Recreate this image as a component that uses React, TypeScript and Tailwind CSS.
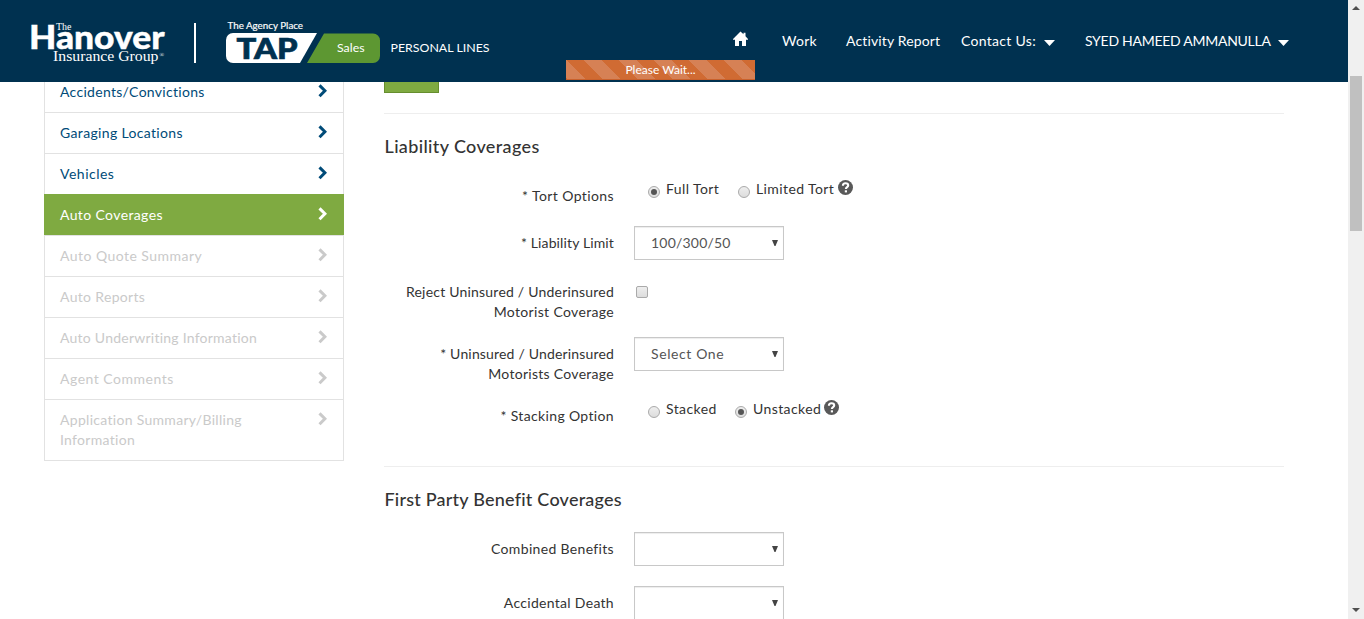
import type { ReactNode } from "react";

type NavItem = { label: string; state: "done" | "active" | "disabled"; tracking: string };

const navItems: NavItem[] = [
  { label: "Accidents/Convictions", state: "done", tracking: "tracking-[0.300px]" },
  { label: "Garaging Locations", state: "done", tracking: "tracking-[0.340px]" },
  { label: "Vehicles", state: "done", tracking: "tracking-[0.5px]" },
  { label: "Auto Coverages", state: "active", tracking: "tracking-[0.380px]" },
  { label: "Auto Quote Summary", state: "disabled", tracking: "tracking-[0.460px]" },
  { label: "Auto Reports", state: "disabled", tracking: "tracking-[0.330px]" },
  { label: "Auto Underwriting Information", state: "disabled", tracking: "tracking-[0.240px]" },
  { label: "Agent Comments", state: "disabled", tracking: "tracking-[0.5px]" },
  { label: "Application Summary/Billing Information", state: "disabled", tracking: "tracking-[0.300px]" },
];

const navStyles = {
  done: "border-[#e2e2e2] text-[#004b78]",
  active: "border-[#7faa41] bg-[#7faa41] text-white",
  disabled: "border-[#e2e2e2] text-[#cacaca]",
};

function Chevron() {
  return (
    <svg className="mt-[2px] h-[14px] w-[9px] shrink-0" viewBox="0 0 9 14" fill="none" stroke="currentColor" strokeWidth="3">
      <path d="M1.500 1.400 6.900 6.800 1.500 12.200" />
    </svg>
  );
}

function Caret() {
  return (
    <svg className="h-[6px] w-[11px]" viewBox="0 0 11 6" fill="currentColor">
      <path d="M0 0h11L5.5 6z" />
    </svg>
  );
}

function Help() {
  return (
    <svg className="h-[15px] w-[15px]" viewBox="0 0 15 15" fill="none">
      <circle cx="7.5" cy="7.5" r="7.5" fill="#595959" />
      <path d="M4.900 5.700C4.900 3.900 6 3.200 7.500 3.200s2.700.8 2.700 2.200c0 1.700-2.300 1.700-2.300 3.500" stroke="#fff" strokeWidth="2.100" />
      <path d="M6.800 10.300h2.200v2.100H6.800z" fill="#fff" />
    </svg>
  );
}

function Logo() {
  return (
    <svg className="h-[82px] w-[500px]" viewBox="0 0 500 82" fill="#fff">
      <text x="56" y="29.500" fontFamily="Liberation Serif, serif" fontSize="9.500" textLength="15.500" lengthAdjust="spacingAndGlyphs">The</text>
      <text x="29" y="48.500" fontFamily="Lato, sans-serif" fontWeight="900" fontSize="31.500" stroke="#fff" strokeWidth=".4" textLength="135.500" lengthAdjust="spacingAndGlyphs">
        Hanover
      </text>
      <text x="53" y="60.700" fontFamily="Liberation Serif, serif" fontSize="15" textLength="105.500" lengthAdjust="spacingAndGlyphs">
        Insurance Group
      </text>
      <text x="159.500" y="57" fontFamily="Liberation Serif, serif" fontSize="6">®</text>
      <path d="M194 23h2v40h-2z" />
      <text x="227.500" y="29" fontFamily="Lato, sans-serif" fontWeight="400" stroke="#fff" strokeWidth=".15" fontSize="8.500" textLength="75.500" lengthAdjust="spacingAndGlyphs">
        The Agency Place
      </text>
      <path d="M233 33h84l-17 30h-67a7 7 0 0 1-7-7V40a7 7 0 0 1 7-7z" />
      <path d="M324 33.500h49a7 7 0 0 1 7 7V56a7 7 0 0 1-7 7h-66z" fill="#5d9732" />
      <text x="236.500" y="58.700" fill="#003150" stroke="#003150" strokeWidth=".7" fontFamily="Lato, sans-serif" fontWeight="900" fontSize="28.500" textLength="61" lengthAdjust="spacingAndGlyphs">
        TAP
      </text>
      <text x="337" y="52" fontFamily="Lato, sans-serif" fontWeight="400" fontSize="11.500" textLength="27.500" lengthAdjust="spacingAndGlyphs">
        Sales
      </text>
      <text x="390.500" y="52" fontFamily="Lato, sans-serif" fontWeight="400" fontSize="11.500" textLength="99" lengthAdjust="spacingAndGlyphs">
        PERSONAL LINES
      </text>
    </svg>
  );
}

function Header() {
  return (
    <header className="relative flex h-[82px] shrink-0 bg-[#003150] text-white">
      <Logo />
      <nav className="flex pt-[31px] text-[14px] leading-5">
        <svg className="ml-[233px] h-[15px] w-[15px]" viewBox="0 0 15 15" fill="#fff">
          <path d="M7.500.5 10.500 3.300V1.800h2V5.300L15 7.900v.8h-2V15H9v-5H6v5H2V8.700H0v-.8z" />
        </svg>
        <span className="ml-[34px] w-[64px] tracking-[0.250px]">Work</span>
        <span className="w-[115px] whitespace-nowrap tracking-[0.150px]">Activity Report</span>
        <span className="w-[83px] whitespace-nowrap tracking-[0.300px]">Contact Us:</span>
        <span className="mt-[9px] w-[41px]"><Caret /></span>
        <span className="w-[193px] whitespace-nowrap tracking-[-0.270px]">SYED HAMEED AMMANULLA</span>
        <span className="mt-[9px]"><Caret /></span>
      </nav>
      <div className="absolute top-[60px] left-[566px] flex h-5 w-[189px] items-center justify-center border-b border-[#c9612c] bg-[repeating-linear-gradient(45deg,#d06b33_0px,#d06b33_1.4px,#d68155_1.4px,#d68155_14px,#d06b33_14px,#d06b33_24.75px)] text-[12px] leading-5">
        Please Wait...
      </div>
    </header>
  );
}

function Sidebar() {
  return (
    <ul className="-mt-[11px] ml-[44px] w-[300px] shrink-0">
      {navItems.map((item) => (
        <li key={item.label} className={`-mb-px flex justify-between border py-[10px] pr-4 pl-[15px] ${navStyles[item.state]}`}>
          <span className={`w-[220px] ${item.tracking}`}>{item.label}</span>
          <Chevron />
        </li>
      ))}
    </ul>
  );
}

function Select({ value = "", tracking = "tracking-[0.900px]" }: { value?: string; tracking?: string }) {
  return (
    <div className={`flex h-[34px] w-[150px] items-center justify-between border border-[#c8c8c8] bg-white pr-[5px] pl-4 text-[#555] shadow-[inset_0_1px_1px_rgba(0,0,0,0.075)] ${tracking}`}>
      <span>{value}</span>
      <svg className="h-[6px] w-[6px]" viewBox="0 0 6 6" fill="#444"><path d="M0 0h6L3.500 6h-1z" /></svg>
    </div>
  );
}

function Radio({ label, checked, width }: { label: string; checked?: boolean; width: string }) {
  return (
    <label className={`flex ${width}`}>
      <span className="mt-[7px] flex h-3 w-3 items-center justify-center rounded-full border border-[#aaa] bg-linear-to-b from-[#eee] to-[#ddd]">
        {checked && <span className="h-[6px] w-[6px] rounded-full bg-[#555]" />}
      </span>
      <span className="ml-[6px] whitespace-nowrap">{label}</span>
    </label>
  );
}

function Row({ label, className, children }: { label: ReactNode; className: string; children: ReactNode }) {
  return (
    <div className={`flex ${className}`}>
      <div className="mr-5 w-[230px] shrink-0 text-right">{label}</div>
      {children}
    </div>
  );
}

function Coverages() {
  return (
    <main className="ml-10 w-[900px] tracking-[0.400px] text-[#333]">
      <div className="h-[11px] w-[55px] border border-t-0 border-[#668e2e] bg-[#7faa41]" />
      <section className="mt-5 h-[353px] border-t border-[#eee] pt-[22px]">
        <h2 className="pl-[0.500px] text-[18px] leading-5 font-medium tracking-[0.360px]">Liability Coverages</h2>
        <Row label="* Tort Options" className="mt-[30px] h-10">
          <div className="-mt-[7px] ml-[14px] flex">
            <Radio label="Full Tort" checked width="w-[90px]" />
            <Radio label="Limited Tort" width="w-[100px]" />
            <span className="mt-[1px]"><Help /></span>
          </div>
        </Row>
        <Row label={<div className="pt-[7px] tracking-[0.130px]">* Liability Limit</div>} className="h-[56px]">
          <Select value="100/300/50" tracking="tracking-[0.200px]" />
        </Row>
        <Row label={<><div className="tracking-[0.210px]">Reject Uninsured / Underinsured</div><div className="tracking-[0.340px]">Motorist Coverage</div></>} className="h-[55px]">
          <span className="mt-1 ml-[2px] h-3 w-3 rounded-[2px] border border-[#aaa] bg-linear-to-b from-[#eee] to-[#ddd]" />
        </Row>
        <Row label={<div className="pt-[7px]"><div className="tracking-[0.170px]">* Uninsured / Underinsured</div><div className="tracking-[0.290px]">Motorists Coverage</div></div>} className="h-[69px]">
          <Select value="Select One" tracking="tracking-[0.600px]" />
        </Row>
        <Row label={<div className="tracking-[0.350px]">* Stacking Option</div>} className="">
          <div className="-mt-[7px] ml-[14px] flex">
            <Radio label="Stacked" width="w-[87px]" />
            <Radio label="Unstacked" checked width="w-[89px]" />
            <span className="mt-[1px]"><Help /></span>
          </div>
        </Row>
      </section>
      <section className="border-t border-[#eee] pt-[22px]">
        <h2 className="pl-[0.500px] text-[18px] leading-5 font-medium tracking-[0.220px]">First Party Benefit Coverages</h2>
        <Row label={<div className="pt-[7px] tracking-[0.330px]">Combined Benefits</div>} className="mt-[23px] h-[54px]">
          <Select />
        </Row>
        <Row label={<div className="pt-[7px] tracking-[0.300px]">Accidental Death</div>} className="h-[54px]">
          <Select />
        </Row>
      </section>
    </main>
  );
}

function Scrollbar() {
  return (
    <div className="flex w-4 shrink-0 flex-col items-center bg-[#f0f0f0] text-[#505050]">
      <svg className="mt-[6px] h-1 w-2" viewBox="0 0 8 4" fill="currentColor"><path d="M0 4h8L4 0z" /></svg>
      <div className="mt-[66px] h-[155px] w-3 bg-[#c0c0c0]" />
      <svg className="mt-auto mb-[7px] h-1 w-2" viewBox="0 0 8 4" fill="currentColor"><path d="M0 0h8L4 4z" /></svg>
    </div>
  );
}

export default function App() {
  return (
    <div className="flex h-[619px] w-[1364px] overflow-hidden bg-white font-[Lato,sans-serif] text-[14px] leading-5">
      <div className="flex w-[1348px] flex-col">
        <Header />
        <div className="flex min-h-0 flex-1 overflow-hidden">
          <Sidebar />
          <Coverages />
        </div>
      </div>
      <Scrollbar />
    </div>
  );
}
